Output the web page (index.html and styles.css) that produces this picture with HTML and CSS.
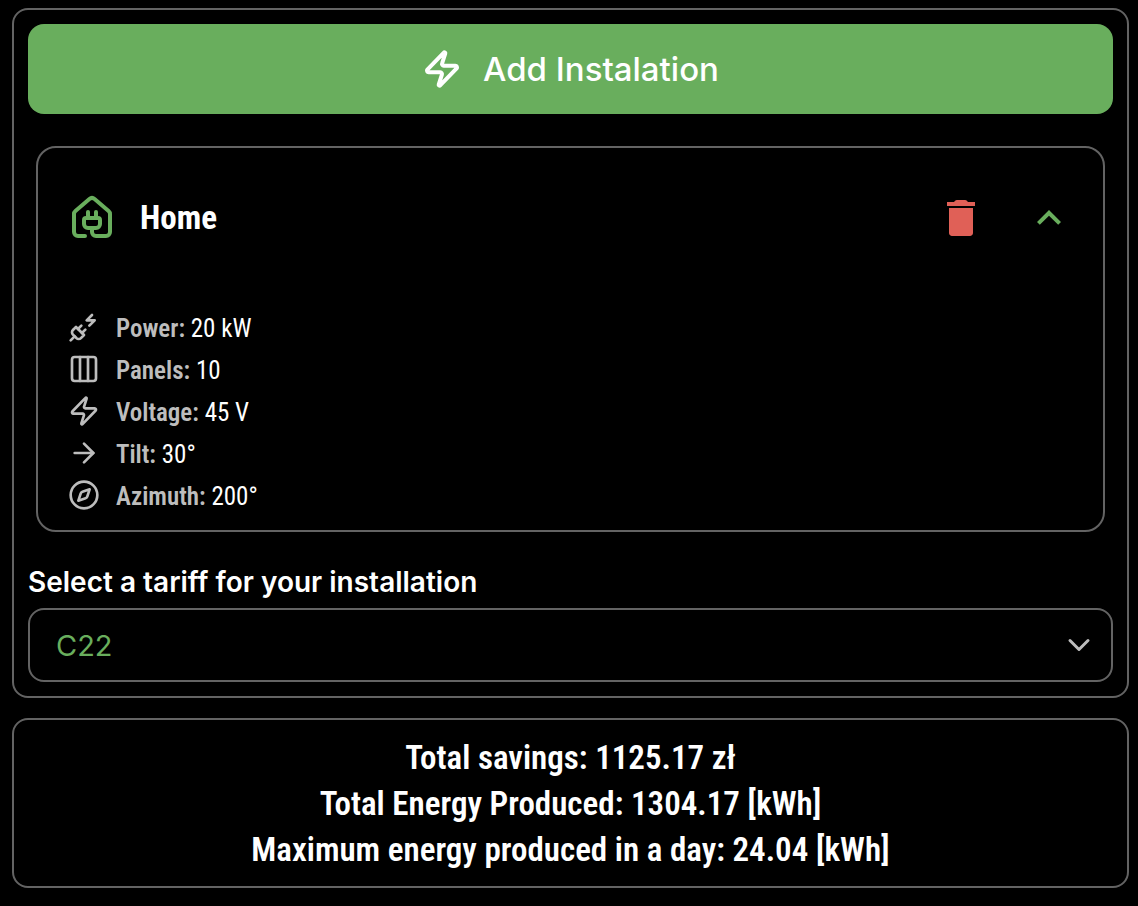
FILE: index.html
```html
<!DOCTYPE html>
<html lang="en">
<head>
  <meta charset="utf-8">
  <meta name="viewport" content="width=device-width, initial-scale=1">
  <title>Installations</title>
  <link rel="stylesheet" href="styles.css">
</head>
<body>
  <main class="page">
    <section class="panel">
      <button class="add-button" type="button">
        <svg class="icon icon-lg" viewBox="0 0 24 24" aria-hidden="true"><path d="M4 14a1 1 0 0 1-.78-1.63l9.9-10.2a.5.5 0 0 1 .86.46l-1.92 6.02A1 1 0 0 0 13 10h7a1 1 0 0 1 .78 1.63l-9.9 10.2a.5.5 0 0 1-.86-.46l1.92-6.02A1 1 0 0 0 11 14z"/></svg>
        <span>Add Instalation</span>
      </button>

      <article class="card">
        <header class="card-header">
          <svg class="icon icon-xl icon-green" viewBox="0 0 24 24" aria-hidden="true"><path d="M10 12V9"/><path d="M14 12V9"/><path d="M9 12h6a1 1 0 0 1 1 1v2a2 2 0 0 1-2 2h-4a2 2 0 0 1-2-2v-2a1 1 0 0 1 1-1z"/><path d="M8.5 21H5a2 2 0 0 1-2-2v-9a2 2 0 0 1 .709-1.528l7-5.999a2 2 0 0 1 2.582 0l7 5.999A2 2 0 0 1 21 10v9a2 2 0 0 1-2 2h-5a2 2 0 0 1-2-2v-2"/></svg>
          <h2 class="card-title">Home</h2>
          <div class="card-actions">
            <button class="icon-button delete" type="button" aria-label="Delete">
              <svg class="glyph" viewBox="0 0 24 24" aria-hidden="true"><path d="M6 19.500c0 .83.67 1.500 1.500 1.500h9c.83 0 1.500-.67 1.500-1.500V7H6zM19 4h-3.500l-.7-.7a1 1 0 0 0-.7-.3H9.900a1 1 0 0 0-.7.3l-.7.7H5v2h14z"/></svg>
            </button>
            <button class="icon-button collapse" type="button" aria-label="Collapse" aria-expanded="true">
              <svg class="glyph" viewBox="0 0 24 24" aria-hidden="true"><path d="M12 8l-6 6 1.410 1.410L12 10.830l4.590 4.580L18 14z"/></svg>
            </button>
          </div>
        </header>
        <ul class="specs">
          <li class="spec">
            <svg class="icon icon-md" viewBox="0 0 24 24" aria-hidden="true"><path d="M6.300 20.300a2.400 2.400 0 0 0 3.400 0L12 18l-6-6-2.300 2.300a2.400 2.400 0 0 0 0 3.400Z"/><path d="m2 22 3-3"/><path d="M7.500 13.500 10 11"/><path d="M10.500 16.500 13 14"/><path d="m18 3-4 4h6l-4 4"/></svg>
            <span class="spec-text"><b>Power:</b> 20 kW</span>
          </li>
          <li class="spec">
            <svg class="icon icon-md" viewBox="0 0 24 24" aria-hidden="true"><rect x="3" y="3" width="18" height="18" rx="2"/><path d="M9 3v18"/><path d="M15 3v18"/></svg>
            <span class="spec-text"><b>Panels:</b> 10</span>
          </li>
          <li class="spec">
            <svg class="icon icon-md" viewBox="0 0 24 24" aria-hidden="true"><path d="M4 14a1 1 0 0 1-.78-1.63l9.9-10.2a.5.5 0 0 1 .86.46l-1.92 6.02A1 1 0 0 0 13 10h7a1 1 0 0 1 .78 1.63l-9.9 10.2a.5.5 0 0 1-.86-.46l1.92-6.02A1 1 0 0 0 11 14z"/></svg>
            <span class="spec-text"><b>Voltage:</b> 45 V</span>
          </li>
          <li class="spec">
            <svg class="icon icon-md" viewBox="0 0 24 24" aria-hidden="true"><path d="M5 12h14"/><path d="m12 5 7 7-7 7"/></svg>
            <span class="spec-text"><b>Tilt:</b> 30°</span>
          </li>
          <li class="spec">
            <svg class="icon icon-md" viewBox="0 0 24 24" aria-hidden="true"><circle cx="12" cy="12" r="10"/><path d="m16.240 7.760-1.804 5.411a2 2 0 0 1-1.265 1.265L7.760 16.240l1.804-5.411a2 2 0 0 1 1.265-1.265z"/></svg>
            <span class="spec-text"><b>Azimuth:</b> 200°</span>
          </li>
        </ul>
      </article>

      <label class="tariff-label" for="tariff">Select a tariff for your installation</label>
      <div class="select-wrap">
        <select class="tariff-select" id="tariff">
          <option>C22</option>
        </select>
        <svg class="icon select-arrow" viewBox="0 0 24 24" aria-hidden="true"><path d="m6 9 6 6 6-6"/></svg>
      </div>
    </section>

    <section class="panel summary">
      <p>Total savings: 1125.17 zł</p>
      <p>Total Energy Produced: 1304.17 [kWh]</p>
      <p>Maximum energy produced in a day: 24.04 [kWh]</p>
    </section>
  </main>
</body>
</html>
```
FILE: styles.css
```css
:root {
  --green: #69ae5d;
  --red: #e06057;
  --line: #636363;
  --muted: #bdbdbd;
  --condensed: "Roboto Condensed", "Liberation Sans Narrow", Roboto, sans-serif;
}

* {
  box-sizing: border-box;
}

body {
  margin: 0;
  background: #000;
  color: #fff;
  font-family: Inter, sans-serif;
}

.page {
  display: flex;
  flex-direction: column;
  gap: 20px;
  padding: 8px 9px 18px 12px;
}

.panel {
  display: flex;
  flex-direction: column;
  padding: 14px;
  border: 2px solid var(--line);
  border-radius: 16px;
}

.icon {
  flex: none;
  fill: none;
  stroke: currentColor;
  stroke-width: 2;
  stroke-linecap: round;
  stroke-linejoin: round;
}

.icon-md {
  width: 32px;
  height: 32px;
  color: var(--muted);
}

.icon-lg {
  width: 40px;
  height: 40px;
  stroke-width: 2.4;
}

.icon-xl {
  width: 48px;
  height: 48px;
}

.icon-green {
  color: var(--green);
}

.add-button {
  display: flex;
  align-items: center;
  justify-content: center;
  gap: 21px;
  padding: 25px 16px;
  border: 0;
  border-radius: 16px;
  background: var(--green);
  color: #fff;
  font: 500 33px/40px Inter, sans-serif;
  cursor: pointer;
}

.card {
  margin: 32px 8px;
  padding: 30px;
  padding-bottom: 14px;
  border: 2px solid var(--line);
  border-radius: 20px;
}

.card-header {
  display: flex;
  align-items: center;
  padding: 16px 0;
}

.card-title {
  margin: 0 0 0 24px;
  font: 700 33px/48px var(--condensed);
}

.card-actions {
  display: flex;
  gap: 40px;
  margin-left: auto;
}

.icon-button {
  display: flex;
  padding: 0;
  border: 0;
  background: none;
  cursor: pointer;
}

.glyph {
  width: 48px;
  height: 48px;
  fill: currentColor;
}

.delete {
  color: var(--red);
}

.collapse {
  color: var(--green);
}

.specs {
  margin: 48px 0 0;
  padding: 0;
  list-style: none;
}

.spec {
  display: flex;
  align-items: center;
  gap: 16px;
  font: 400 25px/38px var(--condensed);
}

.spec-text {
  padding-top: 4px;
}

.spec b {
  color: var(--muted);
  font-weight: 600;
}

.tariff-label {
  margin-bottom: 8px;
  font-size: 28px;
  font-weight: 600;
  line-height: 36px;
}

.select-wrap {
  display: grid;
  align-items: center;
}

.select-wrap > * {
  grid-area: 1 / 1;
}

.tariff-select {
  width: 100%;
  padding: 18px 64px 16px 26px;
  border: 2px solid var(--line);
  border-radius: 16px;
  background: #000;
  color: var(--green);
  font: 400 29px/36px Inter, sans-serif;
  appearance: none;
}

.select-arrow {
  justify-self: end;
  width: 36px;
  height: 36px;
  margin-right: 16px;
  color: var(--muted);
  pointer-events: none;
}

.summary {
  align-items: center;
  padding: 15px 14px 13px;
  text-align: center;
  font: 600 33px/46px var(--condensed);
}

.summary p {
  margin: 0;
}
```
